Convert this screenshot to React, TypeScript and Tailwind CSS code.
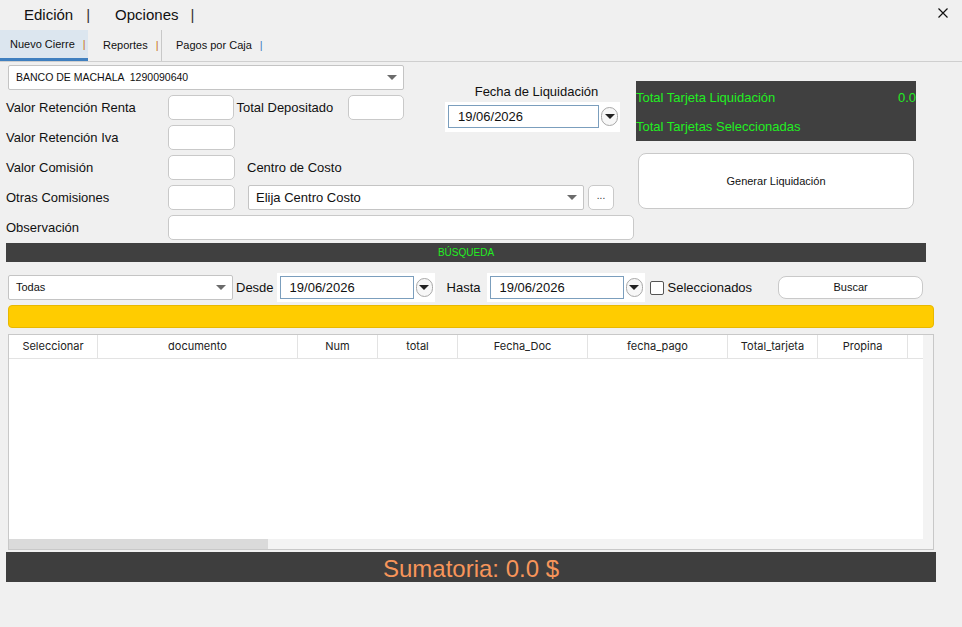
import React from "react";

const font = { fontFamily: '"Liberation Sans", Arial, sans-serif' };

function Caret() {
  return <span className="h-0 w-0 border-x-[5px] border-t-[5px] border-x-transparent border-t-[#6b6b6b]" />;
}

function Select({ value, className, textClass }: { value: string; className: string; textClass: string }) {
  return (
    <div className={`flex items-center justify-between rounded-[2px] border border-[#c4c4c4] bg-white pl-[7px] pr-[6px] ${className}`}>
      <span className={`whitespace-pre text-[#111] ${textClass}`}>{value}</span>
      <Caret />
    </div>
  );
}

function Box({ className }: { className: string }) {
  return <div className={`h-[25px] rounded-[5px] border border-[#c9c9c9] bg-white ${className}`} />;
}

function DateField({ className }: { className: string }) {
  return (
    <div className={`flex h-[29px] items-center bg-white pl-[3px] pr-[2px] ${className}`}>
      <div className="flex h-[23px] flex-1 items-center border border-[#7b9ebd] pl-[9px] text-[13px] text-[#111]">19/06/2026</div>
      <div className="ml-[2px] flex h-[19px] w-[17px] items-center justify-center rounded-full border border-[#a8a8a8] bg-[#f7f7f7]">
        <span className="h-0 w-0 border-x-[5px] border-t-[5px] border-x-transparent border-t-[#222]" />
      </div>
    </div>
  );
}

function Label({ children, className = "" }: { children: React.ReactNode; className?: string }) {
  return <span className={`text-[13px] text-[#111] ${className}`}>{children}</span>;
}

const cols = [
  ["Seleccionar", 89],
  ["documento", 200],
  ["Num", 80],
  ["total", 80],
  ["Fecha_Doc", 130],
  ["fecha_pago", 140],
  ["Total_tarjeta", 90],
  ["Propina", 90],
] as const;

export default function App() {
  return (
    <div className="relative h-[627px] w-[962px] overflow-hidden bg-[#f0f0f0]" style={font}>
      {/* menu */}
      <div className="flex h-[30px] items-center pl-[24px] text-[15px] text-[#111]">
        <span>Edición</span>
        <span className="ml-[13px] text-[#333]">|</span>
        <span className="ml-[25px]">Opciones</span>
        <span className="ml-[12px] text-[#333]">|</span>
      </div>
      <svg className="absolute right-[14px] top-[8px]" width="10" height="10" viewBox="0 0 10 10">
        <path d="M0.5 0.5 L9.5 9.5 M9.5 0.5 L0.5 9.5" stroke="#111" strokeWidth="1.2" />
      </svg>

      {/* tabs */}
      <div className="flex h-[32px] border-b border-[#cfcfcf] text-[11px] text-[#111]">
        <div className="flex w-[88px] items-center border-b-[3px] border-[#3f7fbf] bg-[#dce6ef] pl-[10px]">
          Nuevo Cierre<span className="ml-[8px] text-[#c8741c]">|</span>
        </div>
        <div className="flex w-[74px] items-center border-r border-[#c8c8c8] pl-[15px]">
          Reportes<span className="ml-[8px] text-[#c8741c]">|</span>
        </div>
        <div className="flex items-center pl-[14px]">
          Pagos por Caja<span className="ml-[8px] text-[#3f7fbf]">|</span>
        </div>
      </div>

      {/* form */}
      <div className="flex pl-[6px] pt-[3px]">
        <div className="w-[628px]">
          <div className="flex">
            <div className="w-[398px]">
              <Select value="BANCO DE MACHALA  1290090640" className="ml-[2px] h-[25px] w-[396px]" textClass="text-[10.5px]" />
              <div className="mt-[5px] flex h-[25px] items-center">
                <Label className="w-[162px]">Valor Retención Renta</Label>
                <Box className="w-[67px]" />
                <Label className="ml-[2px] w-[112px]">Total Depositado</Label>
                <Box className="w-[56px]" />
              </div>
              <div className="mt-[5px] flex h-[25px] items-center">
                <Label className="w-[162px]">Valor Retención Iva</Label>
                <Box className="w-[67px]" />
              </div>
            </div>
            <div className="ml-[41px] mt-[17px] flex w-[175px] flex-col items-center">
              <Label className="pl-[8px]">Fecha de Liquidación</Label>
              <DateField className="mt-[0px] h-[30px] w-[175px]" />
            </div>
          </div>
          <div className="mt-[5px] flex h-[25px] items-center">
            <Label className="w-[162px]">Valor Comisión</Label>
            <Box className="w-[67px]" />
            <Label className="ml-[12px]">Centro de Costo</Label>
          </div>
          <div className="mt-[5px] flex h-[25px] items-center">
            <Label className="w-[162px]">Otras Comisiones</Label>
            <Box className="w-[67px]" />
            <Select value="Elija Centro Costo" className="ml-[13px] h-[25px] w-[336px]" textClass="text-[13px]" />
            <div className="ml-[4px] flex h-[25px] w-[26px] items-center justify-center rounded-[5px] border border-[#c9c9c9] bg-white pb-[4px] text-[10px] text-[#333]">...</div>
          </div>
          <div className="mt-[5px] flex h-[25px] items-center">
            <Label className="w-[162px]">Observación</Label>
            <Box className="w-[466px]" />
          </div>
        </div>
        <div className="ml-[2px] mt-[16px] w-[280px]">
          <div className="flex h-[60px] flex-col gap-[14px] bg-[#404040] pt-[9px] text-[13px] leading-[15px] text-[#22ee22]">
            <div className="flex justify-between">
              <span>Total Tarjeta Liquidación</span>
              <span>0.0</span>
            </div>
            <span>Total Tarjetas Seleccionadas</span>
          </div>
          <div className="ml-[2px] mt-[12px] flex h-[56px] w-[276px] items-center justify-center rounded-[8px] border border-[#c9c9c9] bg-white text-[11px] text-[#111]">
            Generar Liquidación
          </div>
        </div>
      </div>

      {/* busqueda */}
      <div className="ml-[6px] mt-[3px] flex h-[19px] w-[920px] items-center justify-center bg-[#404040] text-[10px] text-[#22ee22]">BÚSQUEDA</div>

      <div className="ml-[8px] mt-[13px] flex h-[25px] items-center">
        <Select value="Todas" className="h-[25px] w-[225px]" textClass="text-[11px]" />
        <Label className="ml-[3px]">Desde</Label>
        <DateField className="ml-[3px] w-[158px]" />
        <Label className="ml-[12px]">Hasta</Label>
        <DateField className="ml-[6px] w-[158px]" />
        <span className="ml-[5px] h-[14px] w-[14px] rounded-[2px] border border-[#555] bg-white" />
        <Label className="ml-[4px]">Seleccionados</Label>
        <div className="ml-[26px] flex h-[23px] w-[145px] items-center justify-center rounded-[8px] border border-[#c9c9c9] bg-white text-[11px] text-[#111]">Buscar</div>
      </div>

      <div className="ml-[8px] mt-[5px] h-[23px] w-[926px] rounded-[4px] border border-[#e8b800] bg-[#ffcc00]" />

      {/* table */}
      <div className="ml-[8px] mt-[6px] flex h-[216px] w-[926px] flex-col border border-[#c8c8c8] bg-[#f3f3f3]" style={{ fontFamily: "Inter, Lato, sans-serif" }}>
        <div className="flex flex-1">
          <div className="w-[914px] bg-white">
            <div className="flex h-[24px] border-b border-[#e3e3e3] text-[11px] text-[#222]">
              {cols.map(([name, w]) => (
                <div key={name} className="flex items-center justify-center border-r border-[#e3e3e3]" style={{ width: w }}>
                  {name}
                </div>
              ))}
            </div>
          </div>
        </div>
        <div className="flex h-[10px] w-[914px]">
          <div className="w-[259px] bg-[#dadada]" />
        </div>
      </div>

      <div className="ml-[6px] mt-[2px] flex h-[30px] w-[930px] items-center justify-center bg-[#3e3e3e] pt-[4px] text-[24px] text-[#f7955a]">
        Sumatoria: 0.0 $
      </div>
    </div>
  );
}
